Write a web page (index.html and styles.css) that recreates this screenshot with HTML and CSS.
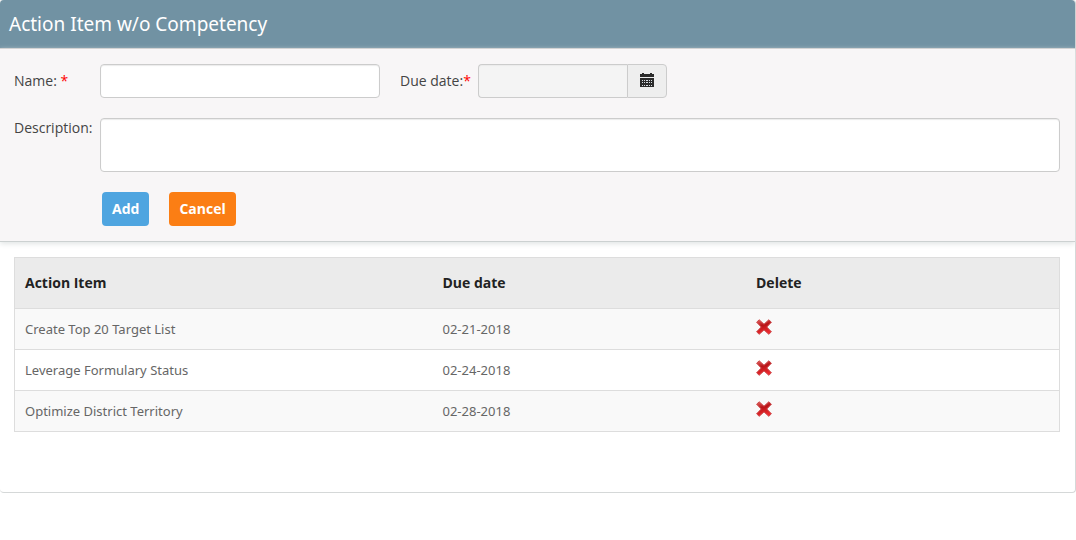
FILE: index.html
```html
<!DOCTYPE html>
<html lang="en">
<head>
<meta charset="utf-8">
<title>Action Item w/o Competency</title>
<link rel="stylesheet" href="styles.css">
</head>
<body>
<svg class="defs" aria-hidden="true">
  <defs>
    <linearGradient id="red" x1="0" y1="0" x2="0.3" y2="1">
      <stop offset="0" stop-color="#e66a66"/>
      <stop offset="0.45" stop-color="#b81418"/>
      <stop offset="1" stop-color="#ee2a2e"/>
    </linearGradient>
    <symbol id="cross" viewBox="0 0 16 16">
      <path d="M3.2.8 8 5.2 12.8.8 15.4 3.2 10.8 8l4.6 4.8-2.6 2.5L8 10.9l-4.8 4.4L.6 12.8 5.2 8 .6 3.2z" fill="url(#red)" stroke="#cc4a4c" stroke-width="1" stroke-linejoin="round"/>
    </symbol>
  </defs>
</svg>
<main class="panel">
  <h1 class="panel-title">Action Item w/o Competency</h1>
  <form class="form">
    <div class="row">
      <label class="label" for="name">Name: <span class="required">*</span></label>
      <input class="field name" id="name" type="text">
      <label class="date-label" for="due">Due date:<span class="required">*</span></label>
      <div class="date-group">
        <input class="field date" id="due" type="text" readonly>
        <button class="calendar" type="button" aria-label="Choose date">
          <svg width="14" height="14" viewBox="0 0 14 14" aria-hidden="true">
            <path d="M0 1h2V0h2v1h6V0h2v1h2v3H0zM0 5h14v9H0z" fill="#2b2b2b"/>
            <path d="M2 7h1v1H2zm2 0h1v1H4zm2 0h2v1H6zm3 0h1v1H9zm2 0h1v1h-1zM2 9h1v1H2zm2 0h1v1H4zm2 0h2v1H6zm3 0h1v1H9zm2 0h1v1h-1zM2 12h1v1H2zm2 0h1v1H4zm2 0h2v1H6zm3 0h1v1H9zm2 0h1v1h-1z" fill="#d8dde4"/>
          </svg>
        </button>
      </div>
    </div>
    <div class="row">
      <label class="label" for="description">Description:</label>
      <textarea class="field description" id="description"></textarea>
    </div>
    <div class="actions">
      <button class="btn add" type="button">Add</button>
      <button class="btn cancel" type="button">Cancel</button>
    </div>
  </form>
  <div class="list">
    <table class="table">
      <thead>
        <tr><th class="col-item">Action Item</th><th class="col-date">Due date</th><th>Delete</th></tr>
      </thead>
      <tbody>
        <tr><td>Create Top 20 Target List</td><td>02-21-2018</td><td class="cell-delete"><button class="delete" type="button" aria-label="Delete"><svg width="16" height="16"><use href="#cross"/></svg></button></td></tr>
        <tr><td>Leverage Formulary Status</td><td>02-24-2018</td><td class="cell-delete"><button class="delete" type="button" aria-label="Delete"><svg width="16" height="16"><use href="#cross"/></svg></button></td></tr>
        <tr><td>Optimize District Territory</td><td>02-28-2018</td><td class="cell-delete"><button class="delete" type="button" aria-label="Delete"><svg width="16" height="16"><use href="#cross"/></svg></button></td></tr>
      </tbody>
    </table>
  </div>
</main>
</body>
</html>
```
FILE: styles.css
```css
* { box-sizing: border-box; }
body {
  margin: 0;
  background: #fff;
  color: #444;
  font: 14px/20px "Droid Sans", "Open Sans", sans-serif;
}
button, input, textarea { font: inherit; }
.defs { position: absolute; width: 0; height: 0; }
.panel {
  border: 1px solid #d5d8d8;
  border-width: 0 1px 1px 0;
  border-radius: 4px;
  padding-bottom: 60px;
}
.panel-title {
  margin: 0;
  padding: 10px 9px;
  border-radius: 4px 4px 0 0;
  background: #7192a3;
  box-shadow: 0 0 3px #c0c4c6;
  color: #fff;
  font-family: "Droid Sans", "Noto Sans", sans-serif;
  font-size: 19px;
  font-weight: 400;
  line-height: 28px;
}
.form {
  padding: 15px 15px 15px 14px;
  border-top: 1px solid #d3d3d3;
  border-bottom: 1px solid #ccd1d1;
  background: #f8f6f7;
  box-shadow: 0 2px 5px #e2e6e6;
}
.row { display: flex; margin-bottom: 20px; }
.label { width: 86px; padding-top: 7px; white-space: nowrap; }
.row + .row .label { padding-top: 0; }
.required { color: #f00; }
.field {
  border: 1px solid #ccc;
  border-radius: 4px;
  background: #fff;
  box-shadow: inset 0 1px 1px #ececec;
  padding: 6px 12px;
}
.name { width: 280px; height: 34px; }
.date-label { width: 98px; padding: 7px 0 0 20px; white-space: nowrap; }
.date-group { display: flex; }
.date {
  width: 149px;
  height: 34px;
  border-right: 0;
  border-radius: 4px 0 0 4px;
  background: #f4f4f4;
}
.calendar {
  display: grid;
  place-items: center;
  width: 40px;
  padding: 0 0 2px;
  border: 1px solid #ccc;
  border-radius: 0 4px 4px 0;
  background: #eee;
}
.description { flex: 1; height: 54px; resize: none; }
.actions { display: flex; gap: 20px; padding-left: 88px; }
.btn {
  height: 34px;
  padding: 0 10px;
  border: 0;
  border-radius: 4px;
  color: #fff;
  font-weight: 700;
}
.add { background: #4fa5e0; }
.cancel { background: #fb7e14; }
.list { padding: 15px 15px 0 14px; }
.table {
  width: 100%;
  border: 1px solid #ddd;
  border-collapse: collapse;
  table-layout: fixed;
}
.col-item { width: 40%; }
.col-date { width: 30%; }
th, td { padding: 10px; border-top: 1px solid #ddd; text-align: left; }
th { padding: 15px 10px; background: #ebebeb; color: #222; font-weight: 700; }
td {
  color: #666;
  font-family: "Droid Sans", "Noto Sans", sans-serif;
  font-size: 13px;
}
tbody tr:nth-child(odd) { background: #f9f9f9; }
.cell-delete { vertical-align: top; }
.delete {
  display: block;
  padding: 0;
  border: 0;
  background: none;
}
.delete svg { display: block; }
```
